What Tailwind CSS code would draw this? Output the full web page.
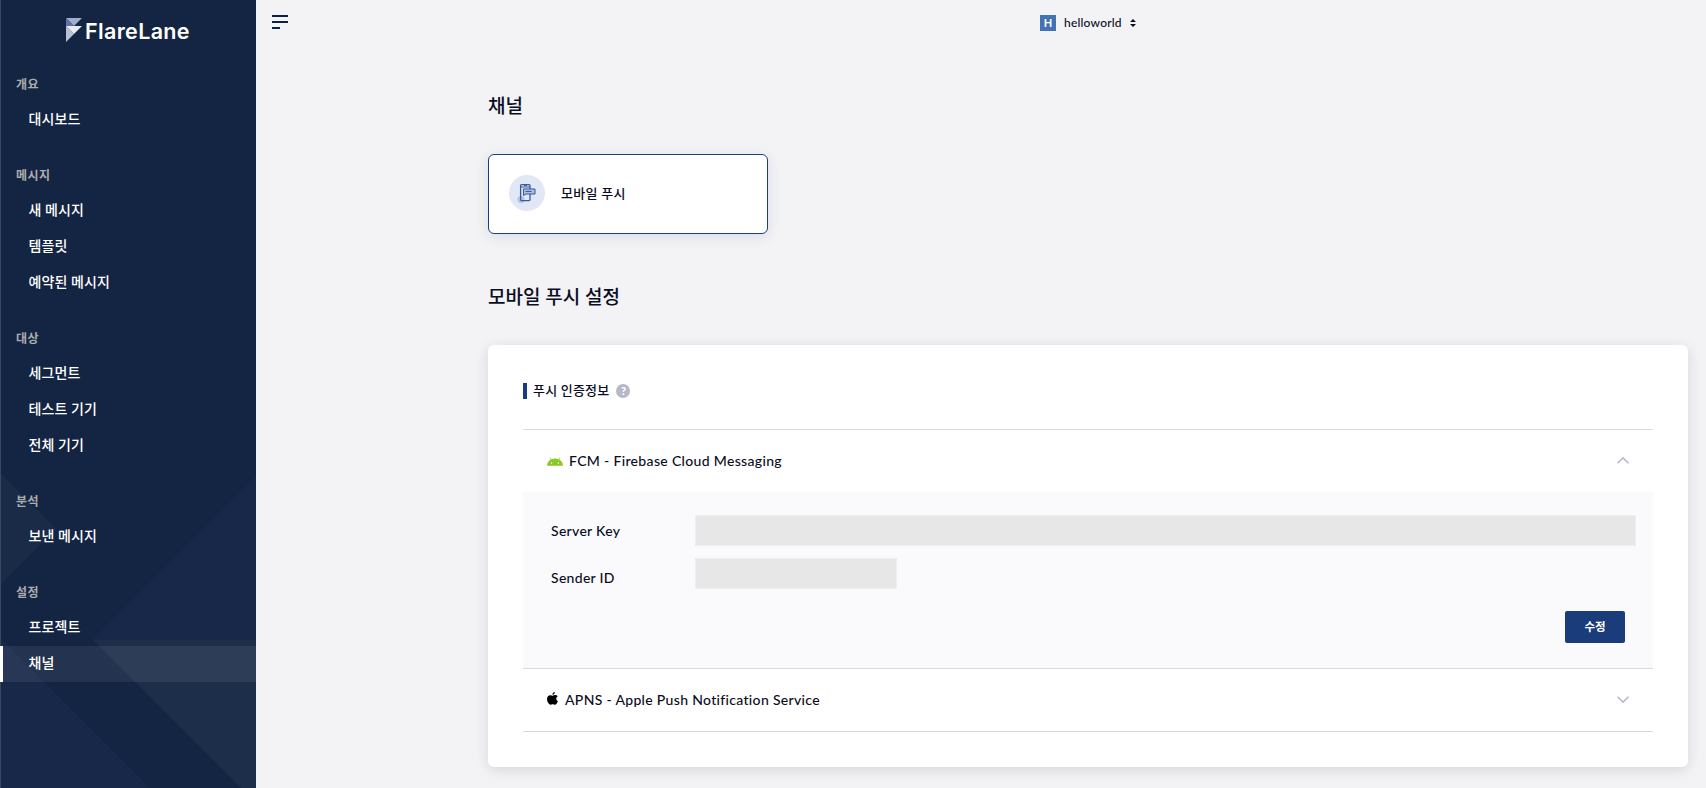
<!DOCTYPE html>
<html lang="ko">
<head>
<meta charset="utf-8">
<title>FlareLane</title>
<script src="https://cdn.jsdelivr.net/npm/@tailwindcss/browser@4"></script>
</head>
<body class="flex h-[788px] w-[1706px] overflow-hidden bg-[#f3f3f5] font-['Lato','Noto_Sans_CJK_KR',sans-serif] text-[#0b0d24]">
  <aside class="relative h-full w-64 shrink-0 bg-[#142543] text-white">
    <svg class="absolute inset-0" width="256" height="788" viewBox="0 0 256 788">
      <path d="M0 473l56 56-56 56z" fill="#1a2b48"/>
      <path d="M256 477v163H93z" fill="#182849"/>
      <path d="M93 640h163v148h-15z" fill="#1d2e4b"/>
      <path d="M0 638l150 150H0z" fill="#182849"/>
      <path d="M0 0h1v788H0z" fill="#394861"/>
    </svg>
    <div class="relative">
      <div class="flex h-[67px] items-start pl-[66px] pt-[18px]">
        <svg width="16" height="24" viewBox="0 0 16 24">
          <path d="M0 0h16L8 8z" fill="#a0acca"/><path d="M0 0l8 8H0z" fill="#6073a8"/>
          <path d="M0 8v16l8-8z" fill="#b9c0d6"/><path d="M0 8h16l-8 8z" fill="#e8ebf3"/>
        </svg>
        <span class="ml-[3px] font-['Inter',sans-serif] text-[21.5px] leading-[26px] font-semibold tracking-[0.35px]">FlareLane</span>
      </div>
      <nav class="flex flex-col gap-5 text-[14px] font-medium tracking-[0.08px]">
        <section>
          <h3 class="flex h-[35px] items-center pl-4 pt-px text-[12px] font-bold tracking-[0.5px] text-[#adadad]">개요</h3>
          <a class="flex h-9 items-center pb-[3px] pl-[28.5px]">대시보드</a>
        </section>
        <section>
          <h3 class="flex h-[35px] items-center pl-4 pt-px text-[12px] font-bold tracking-[0.5px] text-[#adadad]">메시지</h3>
          <a class="flex h-9 items-center pb-[3px] pl-[28.5px]">새 메시지</a>
          <a class="flex h-9 items-center pb-[3px] pl-[28.5px]">템플릿</a>
          <a class="flex h-9 items-center pb-[3px] pl-[28.5px]">예약된 메시지</a>
        </section>
        <section>
          <h3 class="flex h-[35px] items-center pl-4 pt-px text-[12px] font-bold tracking-[0.5px] text-[#adadad]">대상</h3>
          <a class="flex h-9 items-center pb-[3px] pl-[28.5px]">세그먼트</a>
          <a class="flex h-9 items-center pb-[3px] pl-[28.5px]">테스트 기기</a>
          <a class="flex h-9 items-center pb-[3px] pl-[28.5px]">전체 기기</a>
        </section>
        <section>
          <h3 class="flex h-[35px] items-center pl-4 pt-px text-[12px] font-bold tracking-[0.5px] text-[#adadad]">분석</h3>
          <a class="flex h-9 items-center pb-[3px] pl-[28.5px]">보낸 메시지</a>
        </section>
        <section>
          <h3 class="flex h-[35px] items-center pl-4 pt-px text-[12px] font-bold tracking-[0.5px] text-[#adadad]">설정</h3>
          <a class="flex h-9 items-center pb-[3px] pl-[28.5px]">프로젝트</a>
          <a class="flex h-9 items-center border-l-3 border-white bg-white/7 pb-[3px] pl-[25.5px]">채널</a>
        </section>
      </nav>
    </div>
  </aside>

  <main class="flex flex-1 flex-col">
    <header class="flex h-[46px] items-start pl-4">
      <svg class="mt-[15px]" width="16" height="14" viewBox="0 0 16 14" fill="#0b2140"><path d="M0 0h16v2H0zM0 6h16v2H0zM0 12h8v2H0z"/></svg>
      <div class="ml-[752px] mt-[15px] flex h-4 items-center">
        <span class="flex size-4 items-center justify-center bg-[#4472b4] text-[11px] font-bold text-white">H</span>
        <span class="ml-2 w-[66px] text-[12px] leading-4 font-medium tracking-[0.2px]">helloworld</span>
        <svg width="6" height="8" viewBox="0 0 6 8" fill="#0b0d24"><path d="M3 0l3 3H0zM3 8l3-3H0z"/></svg>
      </div>
    </header>

    <div class="ml-[232px] flex w-[1200px] flex-col">
      <h1 class="mt-[45px] text-[19px] leading-[30px] font-[450]">채널</h1>
      <div class="mt-[33px] flex h-20 w-[280px] items-center rounded-md border border-[#1b3f7f] bg-white pl-5 shadow-[0_3px_14px_rgba(27,63,127,0.12)]">
        <span class="mb-0.5 flex size-9 items-center justify-center rounded-full bg-[#e1e7f4]">
          <svg width="20" height="20" viewBox="0 0 20 20" fill="none">
            <circle cx="4" cy="16.500" r="3.600" fill="#b2c5e4"/>
            <rect x="3.600" y="1.600" width="9.400" height="16" rx="1" stroke="#375a9c" stroke-width="1.300"/>
            <path d="M4 4h9M7 2.600h3" stroke="#375a9c"/>
            <path d="M6.500 6h11.500v5H9l-2.500 1.500z" fill="#a9bee0" stroke="#375a9c"/>
            <path d="M8.500 8.500h6" stroke="#375a9c"/>
          </svg>
        </span>
        <span class="ml-4 text-[13px] font-medium tracking-[0.3px]">모바일 푸시</span>
      </div>
      <h2 class="mt-12 text-[19px] leading-[30px] font-[450]">모바일 푸시 설정</h2>

      <section class="mt-[33px] flex h-[422px] flex-col rounded-md bg-white px-[35px] shadow-[0_3px_14px_rgba(0,0,0,0.12)]">
        <div class="mt-[38px] flex h-4 items-center">
          <span class="h-4 w-1 bg-[#1a3c7b]"></span>
          <span class="ml-1.5 text-[13px] font-medium tracking-[0.2px]">푸시 인증정보</span>
          <span class="ml-[7px] flex size-3.5 items-center justify-center rounded-full bg-[#b8b7c7] text-[11px] font-black text-white">?</span>
        </div>
        <div class="mt-[30px] flex h-[63px] items-center border-t border-[#d9d9e0] pb-0.5 pl-6 pr-6">
          <svg class="mt-0.5" width="16" height="9" viewBox="0 0 16 9"><path d="M0 8.800A8 7.400 0 0 1 16 8.800z" fill="#8bc727"/><path d="M4.500 3L3 .5M11.500 3L13 .5" stroke="#8bc727" stroke-width=".8"/><circle cx="4.600" cy="6" r=".65" fill="#fff"/><circle cx="11.400" cy="6" r=".65" fill="#fff"/></svg>
          <span class="ml-1.5 flex-1 text-[14px] font-medium tracking-[0.33px]">FCM - Firebase Cloud Messaging</span>
          <svg width="12" height="7" viewBox="0 0 12 7" fill="none" stroke="#b8b7c7" stroke-width="1.600"><path d="M.5 6.300L6 .9l5.500 5.400"/></svg>
        </div>
        <div class="flex h-[176px] flex-col bg-[#fafafc] pl-7">
          <div class="mt-[23px] flex h-[31px]">
            <span class="mt-[7px] w-[144px] text-[14px] leading-[18px] font-medium tracking-[0.3px]">Server Key</span>
            <span class="h-[31px] w-[941px] border border-[#eeeeee] bg-[#e7e7e7]"></span>
          </div>
          <div class="mt-3 flex h-[31px]">
            <span class="mt-[11px] w-[144px] text-[14px] leading-[18px] font-medium tracking-[0.3px]">Sender ID</span>
            <span class="h-[31px] w-[202px] border border-[#eeeeee] bg-[#e7e7e7]"></span>
          </div>
          <button class="mr-7 mt-[22px] h-8 w-[60px] self-end rounded-xs bg-[#1a3c7b] text-[11.5px] font-bold text-white">수정</button>
        </div>
        <div class="flex h-16 items-center border-y border-[#d9d9e0] pb-0.5 pl-6 pr-6">
          <svg class="mb-px" width="11" height="13" viewBox="0 0 11 13"><path d="M7.800 0c.1 1.500-1 2.800-2.400 2.700C5.300 1.400 6.400.2 7.800 0zM10.900 9.200C10.200 11 9 12.700 7.900 12.700c-.8 0-1.200-.5-2.200-.5s-1.500.5-2.200.5C1.900 12.700 0 9.800 0 7.100c0-2.500 1.600-3.900 3.200-3.900 1 0 1.800.6 2.500.6.600 0 1.500-.7 2.700-.7.900 0 1.700.4 2.300 1.200-2 1.200-1.800 4 .2 4.900z" fill="#000"/></svg>
          <span class="ml-[7px] flex-1 text-[14px] font-medium tracking-[0.32px]">APNS - Apple Push Notification Service</span>
          <svg width="12" height="7" viewBox="0 0 12 7" fill="none" stroke="#b8b7c7" stroke-width="1.600"><path d="M.5 .7L6 6.100 11.500 .7"/></svg>
        </div>
      </section>
    </div>
  </main>
</body>
</html>
